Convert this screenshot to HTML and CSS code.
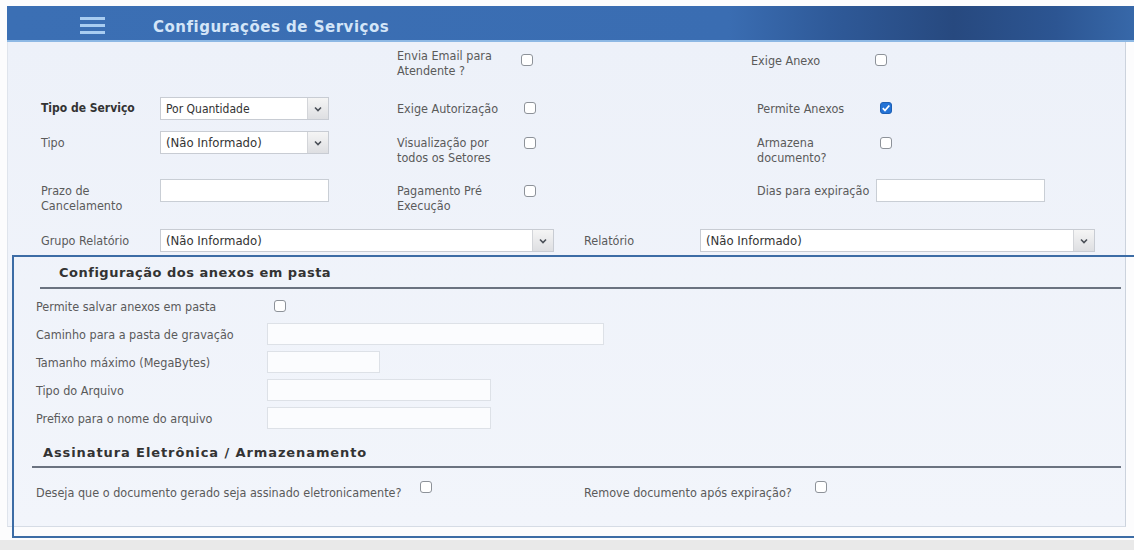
FILE: index.html
```html
<!DOCTYPE html>
<html lang="pt-BR">
<head>
<meta charset="utf-8">
<title>Configurações de Serviços</title>
<link rel="stylesheet" href="styles.css">
</head>
<body>
<div class="app">
  <header class="topbar">
    <div class="menu-btn" aria-label="Menu"><span></span><span></span><span></span></div>
    <h1>Configurações de Serviços</h1>
  </header>

  <main class="panel">
    <section class="general">
      <div class="lbl col3">Envia Email para<br>Atendente ?</div>
      <div class="cb mt6 nudge-3"></div>
      <div class="lbl mt5 nudge-6">Exige Anexo</div>
      <div class="cb mt6 nudge-5"></div>

      <div class="lbl strong mt4">Tipo de Serviço</div>
      <div class="select w169"><span>Por Quantidade</span><i class="arrow"><svg viewBox="0 0 8 6" width="8" height="6"><path d="M1 1.5l3 3 3-3" fill="none" stroke="#4a4f57" stroke-width="1.6"/></svg></i></div>
      <div class="lbl mt4">Exige Autorização</div>
      <div class="cb mt5"></div>
      <div class="lbl mt4">Permite Anexos</div>
      <div class="cb checked mt5"><svg viewBox="0 0 12 12" width="12" height="12"><path d="M2.8 6.2l2.2 2.3 4.3-5" fill="none" stroke="#fff" stroke-width="1.8"/></svg></div>

      <div class="lbl mt4">Tipo</div>
      <div class="select w169"><span class="big">(Não Informado)</span><i class="arrow"><svg viewBox="0 0 8 6" width="8" height="6"><path d="M1 1.5l3 3 3-3" fill="none" stroke="#4a4f57" stroke-width="1.6"/></svg></i></div>
      <div class="lbl mt4">Visualização por<br>todos os Setores</div>
      <div class="cb mt6"></div>
      <div class="lbl mt4">Armazena<br>documento?</div>
      <div class="cb mt6"></div>

      <div class="lbl mt4">Prazo de<br>Cancelamento</div>
      <div class="input w169"></div>
      <div class="lbl mt4">Pagamento Pré<br>Execução</div>
      <div class="cb mt6"></div>
      <div class="lbl mt4">Dias para expiração</div>
      <div class="input w169 nudge-4"></div>
    </section>

    <div class="report-row">
      <div class="lbl rl1">Grupo Relatório</div>
      <div class="select w394"><span class="big">(Não Informado)</span><i class="arrow"><svg viewBox="0 0 8 6" width="8" height="6"><path d="M1 1.5l3 3 3-3" fill="none" stroke="#4a4f57" stroke-width="1.6"/></svg></i></div>
      <div class="lbl rl2">Relatório</div>
      <div class="select w395"><span class="big">(Não Informado)</span><i class="arrow"><svg viewBox="0 0 8 6" width="8" height="6"><path d="M1 1.5l3 3 3-3" fill="none" stroke="#4a4f57" stroke-width="1.6"/></svg></i></div>
    </div>

    <section class="folder">
      <h2 class="sec-title first">Configuração dos anexos em pasta</h2>
      <div class="frow"><div class="lbl flbl">Permite salvar anexos em pasta</div><div class="cb fcb"></div></div>
      <div class="frow"><div class="lbl flbl">Caminho para a pasta de gravação</div><div class="input soft w337"></div></div>
      <div class="frow"><div class="lbl flbl">Tamanho máximo (MegaBytes)</div><div class="input soft w113"></div></div>
      <div class="frow"><div class="lbl flbl">Tipo do Arquivo</div><div class="input soft w224"></div></div>
      <div class="frow"><div class="lbl flbl">Prefixo para o nome do arquivo</div><div class="input soft w224"></div></div>
    </section>

    <section class="sign">
      <h2 class="sec-title second">Assinatura Eletrônica / Armazenamento</h2>
      <div class="srow">
        <div class="lbl s1">Deseja que o documento gerado seja assinado eletronicamente?</div>
        <div class="cb scb"></div>
        <div class="lbl s2">Remove documento após expiração?</div>
        <div class="cb scb"></div>
      </div>
    </section>
  </main>

  <div class="focus-frame"></div>
</div>
</body>
</html>
```
FILE: styles.css
```css
* { box-sizing: border-box; }

body {
  margin: 0;
  background: #e9e9e9;
  font-family: "DejaVu Sans", Verdana, sans-serif;
  font-stretch: condensed;
  font-size: 12.5px;
  color: #5a5a5a;
  overflow: hidden;
}

.app {
  position: relative;
  height: 540px;
  padding: 6px 0 0 7px;
  background: #fcfcfd;
}

/* top bar */
.topbar {
  height: 36px;
  display: flex;
  align-items: center;
  padding-top: 8px;
  background: linear-gradient(90deg, #3b6fb4 0%, #3a6db2 64%, #2f5a99 73%, #27497f 84%, #2c5592 93%, #3768a9 100%);
  border-bottom: 2px solid #8db8e4;
}
.menu-btn {
  margin-left: 73px;
  width: 25px;
  display: flex;
  flex-direction: column;
  gap: 4px;
  margin-top: -3px;
}
.menu-btn span {
  display: block;
  height: 3px;
  background: #a8ccf1;
}
.topbar h1 {
  margin: 0 0 0 48px;
  font-family: "DejaVu Sans", Verdana, sans-serif;
  font-stretch: normal;
  font-weight: bold;
  font-size: 15px;
  letter-spacing: 0.5px;
  color: #d3e5f8;
}

/* panel */
.panel {
  width: 1119px;
  height: 485px;
  background: linear-gradient(#edf1f9, #f2f5fb);
  border-left: 1px solid #dfe4ec;
  border-right: 1px solid #ccd3dd;
  border-bottom: 1px solid #d6dce5;
}

.lbl { line-height: 15px; white-space: nowrap; }
.strong { font-weight: bold; color: #333; font-size: 12px; }

.mt4 { margin-top: 4px; }
.mt5 { margin-top: 5px; }
.mt6 { margin-top: 6px; }
.nudge-3 { margin-left: -3px; }
.nudge-4 { margin-left: -4px; }
.nudge-5 { margin-left: -5px; }
.nudge-6 { margin-left: -6px; }

.general {
  display: grid;
  grid-template-columns: 119px 237px 127px 233px 123px 1fr;
  grid-template-rows: 49px 34px 48px 50px;
  align-items: start;
  padding: 6px 0 0 33px;
}
.col3 { grid-column: 3; }

/* controls */
.cb {
  width: 12px;
  height: 12px;
  border: 1px solid #8d9299;
  border-radius: 3px;
  background: #fff;
}
.cb.checked {
  background: #2373d6;
  border-color: #1d5fb4;
  display: flex;
}
.cb.checked svg { margin: -1px; }

.select {
  height: 23px;
  display: flex;
  align-items: center;
  background: #fff;
  border: 1px solid #c8ccd3;
  color: #333;
}
.select span {
  flex: 1;
  padding-left: 5px;
  font-size: 12px;
}
.select span.big { font-size: 13px; }
.arrow {
  width: 21px;
  height: 100%;
  display: flex;
  align-items: center;
  justify-content: center;
  background: linear-gradient(#f5f5f5, #dedfe2);
  border-left: 1px solid #d3d5d9;
}
.input {
  height: 23px;
  background: #fff;
  border: 1px solid #c9ced5;
}
.input.soft {
  height: 22px;
  background: #fbfcfe;
  border-color: #dde1e7;
}

.w169 { width: 169px; }
.w394 { width: 394px; }
.w395 { width: 395px; }
.w337 { width: 337px; }
.w113 { width: 113px; }
.w224 { width: 224px; }

.report-row {
  display: flex;
  align-items: flex-start;
  padding-left: 33px;
}
.report-row .lbl { margin-top: 4px; }
.rl1 { width: 119px; }
.rl2 { width: 116px; margin-left: 30px; }

/* sections */
.sec-title {
  margin: 0 4px 0 0;
  font-family: "DejaVu Sans", Verdana, sans-serif;
  font-stretch: normal;
  font-weight: bold;
  font-size: 13px;
  line-height: 18px;
  color: #333;
  border-bottom: 2px solid #6b7380;
}
.sec-title.first {
  margin-left: 32px;
  padding: 12px 0 5px 19px;
  letter-spacing: 0.5px;
}
.sec-title.second {
  margin-left: 24px;
  padding: 12px 0 4px 11px;
  letter-spacing: 0.9px;
}

.folder .sec-title { margin-bottom: 3px; }
.frow {
  height: 28px;
  display: flex;
  align-items: center;
  padding-left: 28px;
}
.flbl { width: 231px; }
.fcb { margin-left: 7px; }

.srow {
  display: flex;
  align-items: flex-start;
  padding: 10px 0 0 28px;
}
.srow .lbl { margin-top: 7px; }
.scb { margin-top: 3px; }
.s1 { width: 384px; }
.s2 { width: 231px; margin-left: 152px; }

/* highlight rectangle drawn over the attachment settings */
.focus-frame {
  position: absolute;
  left: 12px;
  top: 255px;
  width: 1140px;
  height: 283px;
  border: 2px solid #3c6ca5;
  pointer-events: none;
}
```
